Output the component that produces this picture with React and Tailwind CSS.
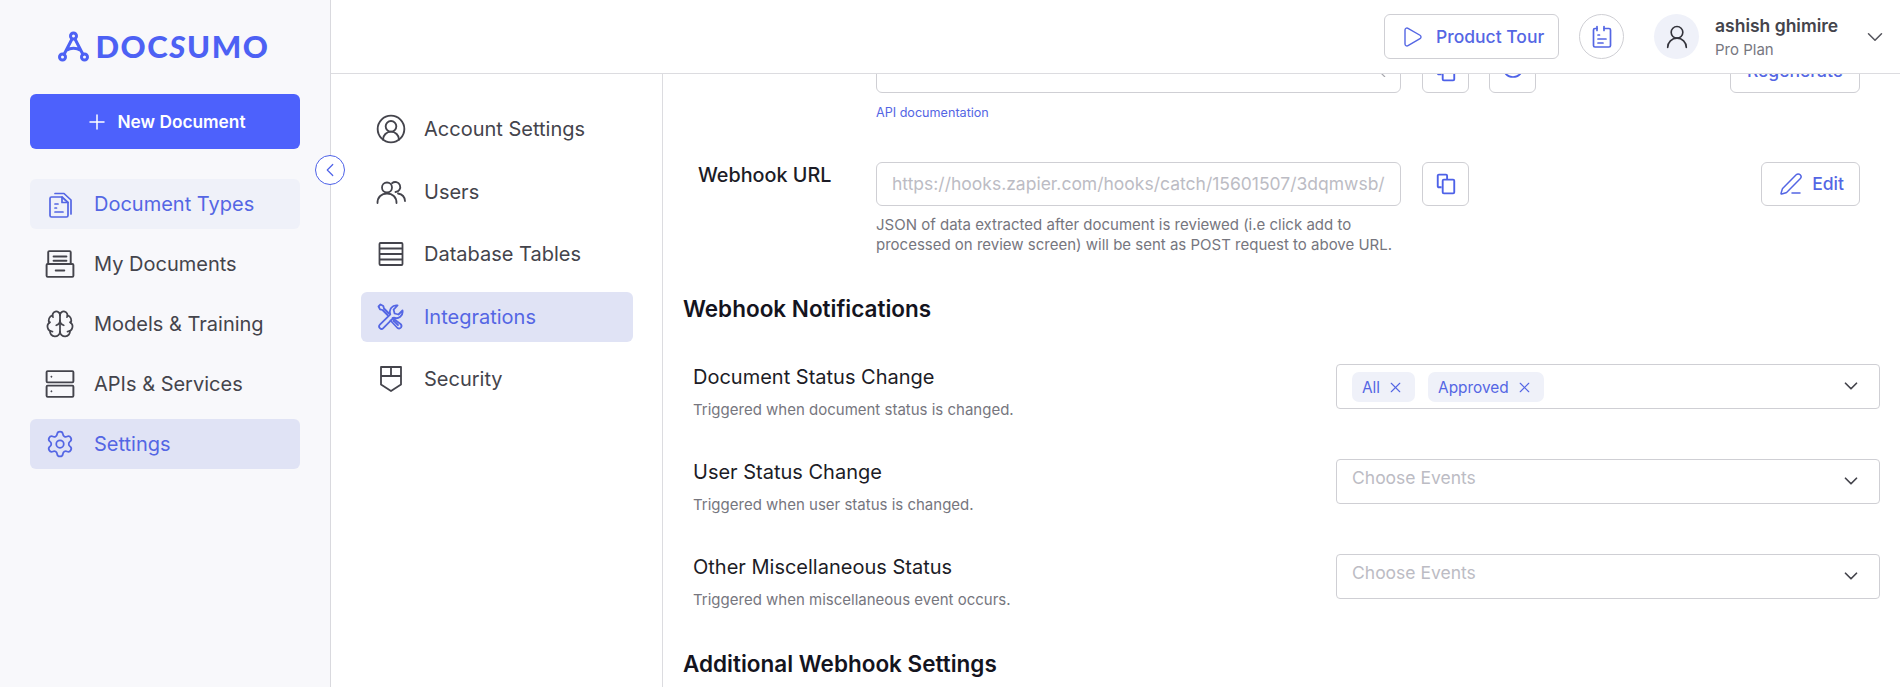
import React from 'react'
import { Brain, ChevronDown, ChevronLeft, CircleUserRound, PenLine, Play, Plus, Settings, UserRound, X } from 'lucide-react'

function DocTypesIcon() {
  return (
    <svg width="26" height="28" viewBox="0 0 26 28" fill="none" stroke="currentColor" strokeWidth="1.7" strokeLinejoin="round" strokeLinecap="round">
      <path d="M3 8.5a1.5 1.5 0 0 1 1.5-1.5H15l6 5.5v13a1.5 1.5 0 0 1-1.5 1.5h-15A1.5 1.5 0 0 1 3 25.5z" />
      <path d="M15 7v5.5h6" />
      <path d="M8 3.5h9l7 6.5v14" />
      <path d="M8 14h3M8 18h1.5M8 22h8" />
    </svg>
  )
}

function DrawerIcon() {
  return (
    <svg width="30" height="30" viewBox="0 0 28 28" fill="none" stroke="currentColor" strokeWidth="1.8" strokeLinejoin="round" strokeLinecap="round">
      <path d="M3 13V3a1 1 0 0 1 1-1h19a1 1 0 0 1 1 1v10" />
      <rect x="1.5" y="14" width="25" height="12" rx="1" />
      <path d="M8 7h12M8 11h12M10 20h8" />
    </svg>
  )
}

function ServerIcon() {
  return (
    <svg width="30" height="30" viewBox="0 0 28 28" fill="none" stroke="currentColor" strokeWidth="1.8" strokeLinejoin="round">
      <rect x="1.5" y="2" width="25" height="10.5" rx="1" />
      <rect x="1.5" y="15.5" width="25" height="10.5" rx="1" />
      <circle cx="6" cy="7.2" r="0.6" fill="currentColor" strokeWidth="0.6" />
      <circle cx="6" cy="20.8" r="0.6" fill="currentColor" strokeWidth="0.6" />
    </svg>
  )
}

function UsersIcon() {
  return (
    <svg width="30" height="26" viewBox="0 0 30 26" fill="none" stroke="currentColor" strokeWidth="1.8" strokeLinecap="round">
      <circle cx="11" cy="8.5" r="5" />
      <path d="M1.5 24c0-6 4-9.5 9.5-9.5s9.5 3.5 9.5 9.5" />
      <path d="M16 4.2a5 5 0 1 1 3.5 8.8" />
      <path d="M22 14.5c4 .8 6.8 3.5 7 7.5" />
    </svg>
  )
}

function TableIcon() {
  return (
    <svg width="26" height="26" viewBox="0 0 26 26" fill="none" stroke="currentColor" strokeWidth="1.8" strokeLinejoin="round">
      <rect x="1.5" y="2" width="23" height="22" rx="1" />
      <path d="M1.5 7.5h23M1.5 13h23M1.5 18.5h23" />
    </svg>
  )
}

function ToolsIcon() {
  return (
    <svg width="28" height="28" viewBox="0 0 28 28" fill="none" stroke="currentColor" strokeWidth="1.8" strokeLinejoin="round" strokeLinecap="round">
      <path d="M20.5 2.5a6.5 6.5 0 0 0-7.2 8.8L2.900 21.700a2.400 2.400 0 0 0 3.400 3.400l10.400-10.400a6.500 6.500 0 0 0 8.800-7.200l-4 4-3.900-1-1-3.900z" />
      <path d="M12 10.500 7 5.500 6.300 3 3.500 1.500l-2 2L3 6.300l2.500.7 5 5" />
      <path d="M16.500 17.500 21 22" />
      <path d="m15.500 15 8 6a2.700 2.700 0 0 1 .5 3.500 2.700 2.700 0 0 1-3.500.5l-7-7.500" />
    </svg>
  )
}

function ShieldIcon() {
  return (
    <svg width="24" height="28" viewBox="0 0 24 28" fill="none" stroke="currentColor" strokeWidth="1.8" strokeLinejoin="round">
      <path d="M2 2h20v17.500L12 26 2 19.500z" />
      <path d="M12 2v9M2 11h20" />
    </svg>
  )
}

function ClipboardIcon() {
  return (
    <svg width="20" height="24" viewBox="0 0 20 24" fill="none" stroke="currentColor" strokeWidth="1.7" strokeLinecap="round" strokeLinejoin="round">
      <path d="M5 3.500H3a1.500 1.500 0 0 0-1.500 1.500v15.500A1.500 1.500 0 0 0 3 22h14a1.500 1.500 0 0 0 1.500-1.500V5A1.500 1.500 0 0 0 17 3.500h-5" />
      <path d="M5 1.500v4M12 1.500v4" />
      <path d="M6 10h1.500M6 14h8M6 18h5" />
    </svg>
  )
}

function CopyIcon() {
  return (
    <svg width="20" height="22" viewBox="0 0 18 20" fill="none" stroke="currentColor" strokeWidth="1.7" strokeLinejoin="round">
      <path d="M5 13H2.500a1 1 0 0 1-1-1V2.500a1 1 0 0 1 1-1H9a1 1 0 0 1 1 1V6" />
      <rect x="6" y="6" width="10.500" height="12.500" rx="1" />
    </svg>
  )
}

function Logo() {
  return (
    <div className="flex items-center justify-center h-[94px] pr-[2px] pb-[1px] text-[#4d61f4]">
      <svg width="32" height="32" viewBox="0 0 32 32" fill="none" stroke="currentColor" strokeWidth="3">
        <circle cx="15.500" cy="5" r="3" />
        <circle cx="4.500" cy="26" r="3" />
        <circle cx="26.500" cy="26" r="3" />
        <path d="M14 8 6 23.500M17 8l8 15.500M8 19.500c5-3 10-3 15 0" strokeLinecap="round" />
      </svg>
      <span className="ml-[5px] text-[31px] leading-none font-black tracking-[1.6px]" style={{ fontFamily: 'Lato, sans-serif' }}>
        DOC<span className="italic">S</span>UMO
      </span>
    </div>
  )
}

function SideItem({ icon, label, state }) {
  const tone = state === 'active'
    ? 'bg-[#e0e3f5] text-[#5466e4]'
    : state === 'soft'
      ? 'bg-[#eff1f9] text-[#5466e4]'
      : 'text-[#44444c]'
  return (
    <div className={`flex items-center h-[50px] pl-[15px] rounded-[6px] text-[20px] ${tone}`}>
      <span className="flex justify-center w-[30px] shrink-0">{icon}</span>
      <span className="ml-[19px]">{label}</span>
    </div>
  )
}

function SubItem({ icon, label, active }) {
  return (
    <div className={`flex items-center h-[50px] pl-[14px] rounded-[6px] text-[20px] ${active ? 'bg-[#e0e3f5] text-[#5466e4]' : 'text-[#44444c]'}`}>
      <span className="flex justify-center w-[32px] shrink-0">{icon}</span>
      <span className="ml-[17px]">{label}</span>
    </div>
  )
}

function IconButton({ children }) {
  return (
    <button className="flex items-center justify-center w-[47px] h-[44px] shrink-0 bg-white border border-[#cfcfd4] rounded-[6px] text-[#4d61e8]">
      {children}
    </button>
  )
}

function EventSelect({ children, placeholder }) {
  return (
    <div className="flex items-start w-[544px] h-[45px] pl-[15px] pr-[17px] bg-white border border-[#cfcfd4] rounded-[4px]">
      {placeholder
        ? <span className="mt-[5px] text-[17.5px] text-[#bcbcc4]">{placeholder}</span>
        : children}
      <ChevronDown className="ml-auto mt-[10px] text-[#44444c]" size={22} strokeWidth={1.9} />
    </div>
  )
}

function Chip({ label }) {
  return (
    <span className="flex items-center h-[30px] mt-[7px] mr-[13px] pl-[10px] pr-[11px] pt-[1px] rounded-[7px] bg-[#eff1f9] text-[15.4px] text-[#5466e4]">
      {label}
      <X className="ml-[7px]" size={17} strokeWidth={1.6} />
    </span>
  )
}

function NotifyRow({ title, sub, children }) {
  return (
    <div className="flex justify-between items-start h-[95px] pl-[10px]">
      <div>
        <div className="mt-[1px] text-[20px] leading-[28px] text-[#1c1c26]">{title}</div>
        <div className="mt-[9px] text-[15px] leading-[20px] text-[#76767e]">{sub}</div>
      </div>
      <div className="mt-[2px]">{children}</div>
    </div>
  )
}

export default function App() {
  return (
    <div className="relative flex h-[687px] overflow-hidden bg-white" style={{ fontFamily: 'Inter, sans-serif' }}>
      <aside className="w-[331px] shrink-0 h-full px-[30px] bg-[#f8f8fb] border-r border-[#d9d9de]">
        <div className="-mx-[30px]"><Logo /></div>
        <button className="flex items-center justify-center w-full h-[55px] pl-[1px] pt-[1px] rounded-[6px] bg-[#4d61fc] text-white text-[17.3px] font-semibold">
          <Plus size={24} strokeWidth={1.5} />
          <span className="ml-[8px]">New Document</span>
        </button>
        <nav className="mt-[30px] flex flex-col gap-[10px]">
          <SideItem state="soft" icon={<DocTypesIcon />} label="Document Types" />
          <SideItem icon={<DrawerIcon />} label="My Documents" />
          <SideItem icon={<Brain size={32} strokeWidth={1.4} />} label="Models & Training" />
          <SideItem icon={<ServerIcon />} label="APIs & Services" />
          <SideItem state="active" icon={<Settings size={32} strokeWidth={1.4} />} label="Settings" />
        </nav>
      </aside>

      <button className="absolute left-[315px] top-[155px] z-10 flex items-center justify-center w-[30px] h-[30px] rounded-full bg-white border border-[#4d61e8] text-[#4d61e8]">
        <ChevronLeft size={22} strokeWidth={1.3} />
      </button>

      <div className="flex flex-col flex-1 min-w-0">
        <header className="relative z-10 flex items-center h-[74px] shrink-0 pl-[1053px] bg-white border-b border-[#dcdce0]">
          <button className="flex items-center w-[175px] h-[45px] pl-[15px] pt-[1px] rounded-[6px] border border-[#cfcfd4] text-[#5466e4] text-[17.5px] font-medium">
            <Play size={24} strokeWidth={1.4} />
            <span className="ml-[12px]">Product Tour</span>
          </button>
          <span className="flex items-center justify-center w-[45px] h-[45px] ml-[20px] rounded-full border border-[#cfcfd4] text-[#5466e4]">
            <ClipboardIcon />
          </span>
          <span className="flex items-center justify-center w-[45px] h-[45px] ml-[30px] rounded-full bg-[#eff1f9] text-[#33333b]">
            <UserRound size={28} strokeWidth={1.4} />
          </span>
          <div className="ml-[16px]">
            <div className="text-[17.5px] leading-[26px] font-semibold text-[#44444c]">ashish ghimire</div>
            <div className="text-[15px] leading-[22px] text-[#77777f]">Pro Plan</div>
          </div>
          <ChevronDown className="ml-[24px] text-[#55555d]" size={26} strokeWidth={1.4} />
        </header>

        <div className="flex flex-1 min-h-0">
          <nav className="w-[332px] shrink-0 pt-[30px] pl-[30px] pr-[29px] border-r border-[#dcdce0] flex flex-col gap-[12.5px]">
            <SubItem icon={<CircleUserRound size={32} strokeWidth={1.4} />} label="Account Settings" />
            <SubItem icon={<UsersIcon />} label="Users" />
            <SubItem icon={<TableIcon />} label="Database Tables" />
            <SubItem active icon={<ToolsIcon />} label="Integrations" />
            <SubItem icon={<ShieldIcon />} label="Security" />
          </nav>

          <main className="flex-1 min-w-0 overflow-hidden pl-[20px] pr-[20px]">
            <div className="-mt-[25px] flex items-start pl-[193px] pr-[20px]">
              <div className="flex items-center justify-end w-[525px] h-[44px] shrink-0 pr-[14px] bg-white border border-[#cfcfd4] rounded-[6px] text-[#a8a8ae]">
                <svg width="8" height="12" viewBox="0 0 8 12" fill="none" stroke="currentColor" strokeWidth="1.2">
                  <path d="M0 5l7 7" />
                </svg>
              </div>
              <div className="ml-[21px]"><IconButton><CopyIcon /></IconButton></div>
              <div className="ml-[20px]">
                <IconButton>
                  <svg className="-mt-[8px]" width="22" height="22" viewBox="0 0 22 22" fill="none" stroke="currentColor" strokeWidth="1.7">
                    <circle cx="11" cy="11" r="10" />
                  </svg>
                </IconButton>
              </div>
              <button className="ml-auto w-[130px] h-[44px] bg-white border border-[#cfcfd4] rounded-[6px] text-[17.5px] font-medium text-[#5466e4]">Regenerate</button>
            </div>
            <div className="mt-[12px] pl-[193px] text-[12.6px] leading-[16px] text-[#5466e4]">API documentation</div>

            <div className="mt-[41px] flex items-start pl-[15px] pr-[20px]">
              <div className="w-[178px] shrink-0 -mt-[1px] text-[19.8px] leading-[28px] font-medium text-[#1c1c26]">Webhook URL</div>
              <div className="flex items-center w-[525px] h-[44px] shrink-0 pl-[15px] bg-white border border-[#cfcfd4] rounded-[6px] text-[17.5px] text-[#bcbcc4] overflow-hidden whitespace-nowrap">
                https://hooks.zapier.com/hooks/catch/15601507/3dqmwsb/
              </div>
              <div className="ml-[21px]"><IconButton><CopyIcon /></IconButton></div>
              <button className="flex items-center justify-center ml-auto w-[99px] h-[44px] pl-[2px] bg-white border border-[#cfcfd4] rounded-[6px] text-[17.5px] font-medium text-[#5466e4]">
                <PenLine size={24} strokeWidth={1.5} />
                <span className="ml-[9px]">Edit</span>
              </button>
            </div>
            <p className="mt-[9px] ml-[193px] text-[15px] leading-[19.5px] text-[#76767e]">
              JSON of data extracted after document is reviewed (i.e click add to<br />
              processed on review screen) will be sent as POST request to above URL.
            </p>

            <h2 className="mt-[40px] text-[22.5px] leading-[30px] font-semibold text-[#14141e]">Webhook Notifications</h2>

            <div className="mt-[38px]">
              <NotifyRow title="Document Status Change" sub="Triggered when document status is changed.">
                <EventSelect>
                  <Chip label="All" />
                  <Chip label="Approved" />
                </EventSelect>
              </NotifyRow>
              <NotifyRow title="User Status Change" sub="Triggered when user status is changed.">
                <EventSelect placeholder="Choose Events" />
              </NotifyRow>
              <NotifyRow title="Other Miscellaneous Status" sub="Triggered when miscellaneous event occurs.">
                <EventSelect placeholder="Choose Events" />
              </NotifyRow>
            </div>

            <h2 className="mt-[2px] text-[22.5px] leading-[30px] font-semibold text-[#14141e]">Additional Webhook Settings</h2>
          </main>
        </div>
      </div>
    </div>
  )
}
